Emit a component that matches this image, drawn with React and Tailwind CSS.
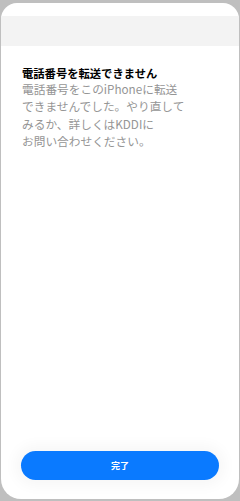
import React from 'react';

export default function App() {
  return (
    <div className="w-[240px] h-[501px] bg-[#bfbfbf] pt-[3px] px-px pb-[2px] font-['Noto_Sans_CJK_JP','Noto_Sans',sans-serif]">
      <div className="h-full bg-white rounded-t-[16px] rounded-b-[20px] flex flex-col overflow-hidden">
        {/* blurred header strip */}
        <div className="mt-[13px] h-[30px] bg-[#f3f3f3]" />

        {/* Message */}
        <div className="px-[21px] pt-[19px]">
          <h1 className="text-[11.3px] leading-[16px] font-bold text-black">
            電話番号を転送できません
          </h1>
          <p className="-mt-[1px] text-[11.7px] leading-[17.3px] text-[#959595] whitespace-nowrap">
            電話番号をこのiPhoneに転送<br />
            できませんでした。やり直して<br />
            みるか、詳しくはKDDIに<br />
            お問い合わせください。
          </p>
        </div>

        <div className="flex-1" />

        {/* Footer button */}
        <div className="px-[20px] pb-[19px]">
          <button className="w-full h-[29px] rounded-full bg-[#0a7aff] text-white text-[9px] font-bold shadow-[0_0_14px_6px_rgba(0,0,0,0.035)]">
            完了
          </button>
        </div>
      </div>
    </div>
  );
}
